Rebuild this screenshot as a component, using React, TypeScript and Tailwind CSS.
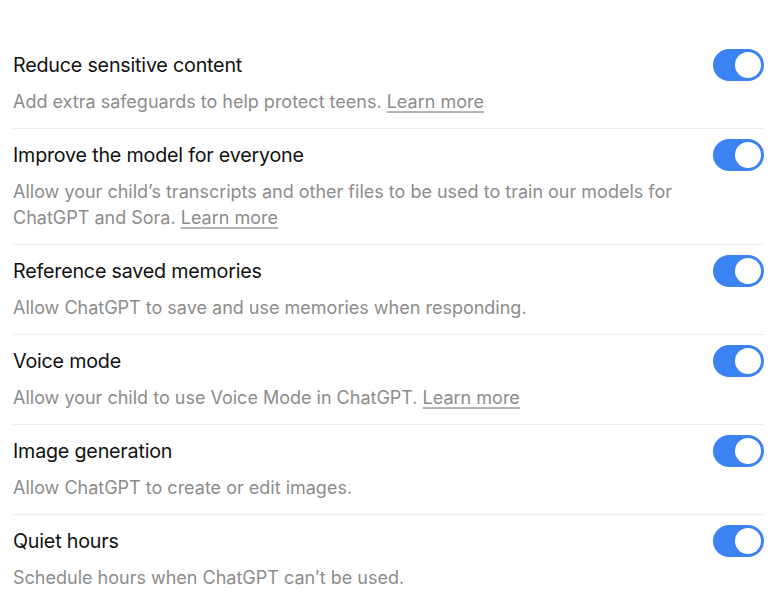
import React from "react";

type Setting = {
  title: string;
  description: string;
  learnMore?: boolean;
};

const settings: Setting[] = [
  {
    title: "Reduce sensitive content",
    description: "Add extra safeguards to help protect teens.",
    learnMore: true,
  },
  {
    title: "Improve the model for everyone",
    description:
      "Allow your child’s transcripts and other files to be used to train our models for ChatGPT and Sora.",
    learnMore: true,
  },
  {
    title: "Reference saved memories",
    description: "Allow ChatGPT to save and use memories when responding.",
  },
  {
    title: "Voice mode",
    description: "Allow your child to use Voice Mode in ChatGPT.",
    learnMore: true,
  },
  {
    title: "Image generation",
    description: "Allow ChatGPT to create or edit images.",
  },
  {
    title: "Quiet hours",
    description: "Schedule hours when ChatGPT can’t be used.",
  },
];

const Toggle = () => (
  <div className="w-[51px] h-[32px] rounded-full bg-[#3b82f3] flex items-center justify-end pr-[3px] shrink-0">
    <div className="w-[26px] h-[26px] rounded-full bg-white" />
  </div>
);

const SettingRow = ({ item, last }: { item: Setting; last: boolean }) => (
  <div className={last ? "pt-[12px] pb-[13px]" : "pt-[12px] pb-[13px] border-b border-[#ededed]"}>
    <div className="flex items-center justify-between h-[28px]">
      <span className="text-[19.7px] leading-[28px] text-[#111111] tracking-[-0.2px]">{item.title}</span>
      <Toggle />
    </div>
    <p className="mt-[10px] text-[18px] leading-[26px] text-[#8c8c8c] pr-[70px]">
      {item.description}
      {item.learnMore && (
        <>
          {" "}
          <span className="underline decoration-[#b5b5b5] decoration-[1.5px] underline-offset-[3px]">
            Learn more
          </span>
        </>
      )}
    </p>
  </div>
);

export default function App() {
  return (
    <div
      className="w-[784px] h-[610px] bg-white pt-[39px] pl-[13px] pr-[20px] overflow-hidden"
      style={{ fontFamily: "Inter, 'Noto Sans', sans-serif" }}
    >
      {settings.map((s, i) => (
        <SettingRow key={s.title} item={s} last={i === settings.length - 1} />
      ))}
    </div>
  );
}
